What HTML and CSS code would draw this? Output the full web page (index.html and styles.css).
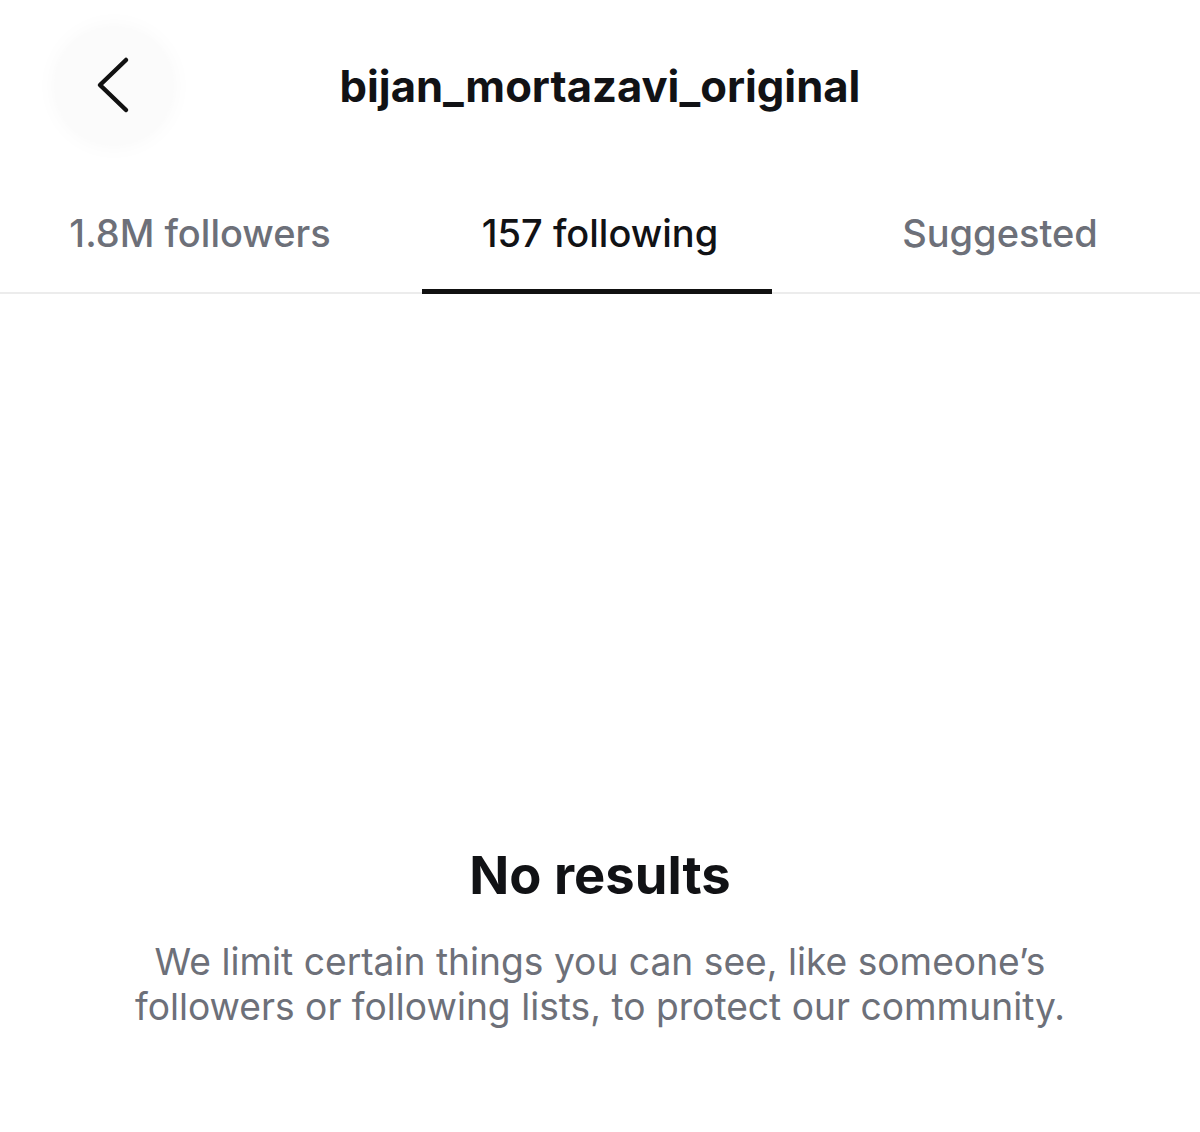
FILE: index.html
```html
<!DOCTYPE html>
<html lang="en">
<head>
<meta charset="utf-8">
<title>bijan_mortazavi_original</title>
<link rel="stylesheet" href="styles.css">
</head>
<body>
<div class="page">
  <header class="topbar">
    <button class="back" aria-label="Back">
      <svg width="120" height="120" viewBox="0 0 120 120"><path d="M72 34 L46 59 L72 84" fill="none" stroke="#111" stroke-width="4.5" stroke-linecap="round" stroke-linejoin="round"/></svg>
    </button>
    <h1 class="title">bijan_mortazavi_original</h1>
  </header>
  <nav class="tabs">
    <div class="tab">1.8M followers</div>
    <div class="tab active">157 following</div>
    <div class="tab">Suggested</div>
  </nav>
  <main class="empty">
    <h2 class="empty-title">No results</h2>
    <p class="empty-text">We limit certain things you can see, like someone’s<br>followers or following lists, to protect our community.</p>
  </main>
</div>
</body>
</html>
```
FILE: styles.css
```css
html, body { margin: 0; padding: 0; background: #fff; }
body { font-family: Inter, "Noto Sans", sans-serif; color: #111215; }
.page { width: 1200px; height: 1132px; display: flex; flex-direction: column; }
.topbar { position: relative; height: 172px; display: flex; align-items: center; justify-content: center; }
.back {
  position: absolute; left: 54px; top: 26px; width: 120px; height: 120px;
  border-radius: 50%; border: none; background: #fbfbfb;
  box-shadow: 0 0 22px rgba(0,0,0,0.03);
  padding: 0; display: block;
}
.back svg { display: block; }
.title { margin: 0; font-size: 43.6px; font-weight: 700; letter-spacing: 0; }
.tabs { display: grid; grid-template-columns: repeat(3, 1fr); border-bottom: 2px solid #ececec; height: 120px; }
.tab { display: flex; justify-content: center; padding-top: 38px; font-size: 38px; font-weight: 500; color: #6d7079; position: relative; }
.tab.active { color: #111215; }
.tab.active::after { content: ""; position: absolute; left: 22px; right: 28px; bottom: -2px; height: 5px; background: #111; }
.empty { display: flex; flex-direction: column; align-items: center; padding-top: 549px; }
.empty-title { margin: 0; font-size: 52.5px; font-weight: 700; letter-spacing: 0; }
.empty-text { margin: 32px 0 0; text-align: center; font-size: 37.2px; line-height: 45px; color: #6d7079; }
```
